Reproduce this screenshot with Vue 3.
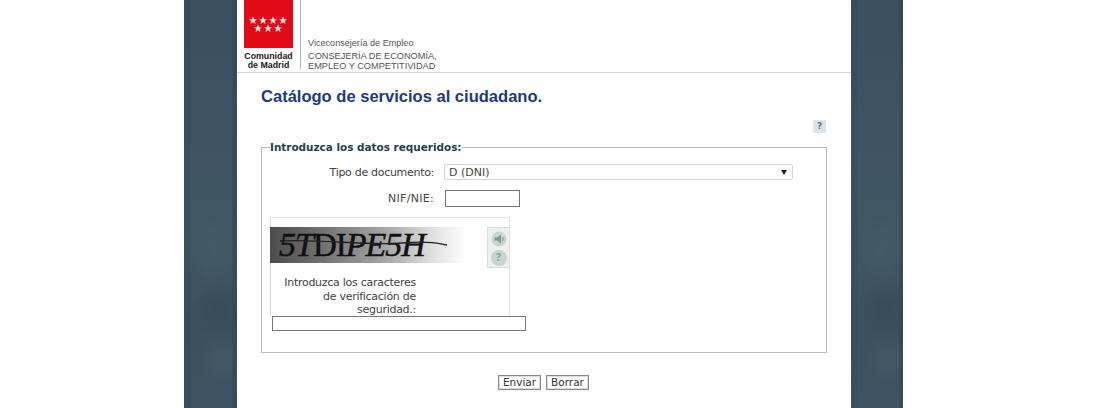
<script setup>
const stars = [[9, 20.5], [19, 20.5], [29, 20.5], [39, 20.5], [14, 28.5], [24, 28.5], [34, 28.5]]
const starPoints = '0,-4 1.2,-1.2 4,-1.2 1.8,.6 2.5,3.6 0,1.8 -2.5,3.6 -1.8,.6 -4,-1.2 -1.2,-1.2'
</script>

<template>
  <div class="page">
    <div class="band bandLeft"></div>
    <main class="content">
      <header class="top">
        <div class="logo">
          <svg class="flag" width="49" height="48" viewBox="0 0 49 48">
            <rect width="49" height="48" fill="#e30a17" />
            <polygon
              v-for="(s, i) in stars"
              :key="i"
              :points="starPoints"
              :transform="`translate(${s[0]} ${s[1]})`"
              fill="#fbe4e4"
            />
          </svg>
          <div class="logoName">Comunidad<br />de Madrid</div>
        </div>
        <div class="rule"></div>
        <div class="dept">
          <div class="vice">Viceconsejería de Empleo</div>
          <div class="cons">CONSEJERÍA DE ECONOMÍA,<br />EMPLEO Y COMPETITIVIDAD</div>
        </div>
      </header>

      <section class="body">
        <h1>Catálogo de servicios al ciudadano.</h1>
        <div class="helpRow">
          <span class="help">?</span>
        </div>
        <fieldset>
          <legend>Introduzca los datos requeridos:</legend>
          <div class="row rowDoc">
            <label>Tipo de documento:</label>
            <div class="fakeSelect">
              <span>D (DNI)</span>
              <span class="caret"></span>
            </div>
          </div>
          <div class="row rowNif">
            <label>NIF/NIE:</label>
            <input class="nif" type="text" />
          </div>
          <div class="captcha">
            <div class="captchaTop">
              <div class="captchaImg">
                <span class="captchaText"><i>5T</i><b>DI</b><i>PE5H</i></span>
                <svg class="strike" width="197" height="36" viewBox="0 0 197 36">
                  <path d="M10 14C50 12 100 19 132 16S168 17 177 18" fill="none" stroke="#222" stroke-width="1.3" />
                </svg>
              </div>
              <div class="captchaTools">
                <span class="tool">
                  <svg width="16" height="16" viewBox="0 0 16 16">
                    <circle cx="8" cy="8" r="7.5" fill="#c6d6cc" />
                    <path d="M3.5 6.5H6L10 3.5V12.5L6 9.5H3.5Z" fill="#7d9a8b" />
                    <path d="M11.5 6C12.5 7 12.5 9 11.5 10" fill="none" stroke="#7d9a8b" />
                  </svg>
                </span>
                <span class="tool toolQ">?</span>
              </div>
            </div>
            <div class="captchaLabel">Introduzca los caracteres de verificación de seguridad.:</div>
            <input class="captchaInput" type="text" />
          </div>
        </fieldset>
        <div class="actions">
          <button type="button">Enviar</button>
          <button type="button">Borrar</button>
        </div>
      </section>
    </main>
    <div class="band"></div>
  </div>
</template>

<style>
html, body {
  margin: 0;
  background: #fff;
}
</style>

<style scoped>
.page {
  display: flex;
  justify-content: flex-start;
  width: 1104px;
  height: 408px;
  padding-left: 184px;
  box-sizing: border-box;
  overflow: hidden;
  font-family: "DejaVu Sans", sans-serif;
  color: #333;
}
.band {
  width: 52px;
  flex: none;
  background:
    linear-gradient(90deg, #33475566 0, #33475566 6px, transparent 7px, transparent 48px, #2f445288 49px, #2f445288 100%),
    radial-gradient(ellipse 22px 34px at 30px 250px, #435a67, transparent),
    radial-gradient(ellipse 30px 30px at 36px 310px, #374b58, transparent),
    radial-gradient(ellipse 24px 24px at 38px 360px, #425965, transparent),
    linear-gradient(180deg, #3b505f 0%, #3e5462 30%, #3f5663 60%, #3c515e 80%, #3f5462 100%);
}
.bandLeft {
  width: 53px;
}
.content {
  width: 614px;
  flex: none;
  background: #fff;
}
.top {
  display: flex;
  height: 73px;
  box-sizing: border-box;
  border-bottom: 1px solid #d6d6d6;
  padding-left: 7px;
}
.logo {
  width: 49px;
}
.flag {
  display: block;
}
.logoName {
  margin-top: 4px;
  font-family: "Liberation Sans", sans-serif;
  font-size: 8.8px;
  line-height: 9px;
  font-weight: 700;
  color: #1c1c1c;
  text-align: center;
  white-space: nowrap;
}
.rule {
  width: 1px;
  height: 69px;
  margin-left: 7px;
  background: #b5b5b5;
}
.dept {
  margin-left: 7px;
  padding-top: 38px;
  font-family: "Liberation Sans", sans-serif;
  color: #555;
  white-space: nowrap;
}
.vice {
  font-size: 9.1px;
  line-height: 11px;
}
.cons {
  margin-top: 2px;
  font-size: 9.2px;
  line-height: 10px;
}
.body {
  padding: 0 24px;
}
h1 {
  margin: 14px 0 0;
  font-family: "Liberation Sans", sans-serif;
  font-size: 16.55px;
  line-height: 20px;
  font-weight: 700;
  color: #1c3a84;
  white-space: nowrap;
}
.helpRow {
  display: flex;
  justify-content: flex-end;
  margin-top: 13px;
  padding-right: 1px;
}
.help {
  width: 13px;
  height: 13px;
  background: #d9e3ea;
  border: 1px solid #e6e6e6;
  box-sizing: border-box;
  font: 700 9px/11px "DejaVu Sans", sans-serif;
  color: #5a7a95;
  text-align: center;
}
fieldset {
  width: 566px;
  height: 212px;
  margin: 8px 0 0;
  padding: 0 0 0 8px;
  box-sizing: border-box;
  border: 1px solid #bdbdbd;
  border-radius: 0;
}
legend {
  padding: 0;
  font-size: 10.45px;
  line-height: 13px;
  font-weight: 700;
  color: #23404f;
  white-space: nowrap;
}
.row {
  display: flex;
  align-items: center;
  font-size: 11px;
}
.row label {
  width: 164px;
  text-align: right;
  white-space: nowrap;
  color: #444;
}
.rowDoc {
  height: 16px;
  margin-top: 10px;
}
.rowDoc label {
  letter-spacing: -0.3px;
}
.fakeSelect {
  display: flex;
  justify-content: space-between;
  align-items: center;
  width: 349px;
  height: 16px;
  margin-left: 10px;
  padding: 0 5px 0 4px;
  box-sizing: border-box;
  border: 1px solid #d4d4d4;
  border-radius: 2px;
  color: #444;
}
.caret {
  width: 0;
  height: 0;
  border-left: 3px solid transparent;
  border-right: 3px solid transparent;
  border-top: 5px solid #222;
}
.rowNif {
  height: 17px;
  margin-top: 10px;
}
.rowNif label {
  letter-spacing: 0.3px;
}
.nif {
  width: 75px;
  height: 17px;
  margin: 0 0 0 11px;
  padding: 0;
  box-sizing: border-box;
  border: 1px solid #777;
  background: #fff;
}
.captcha {
  width: 240px;
  height: 100px;
  margin-top: 10px;
  box-sizing: border-box;
  border: 1px solid #e2e2e2;
  border-bottom: 0;
  border-left-color: #d8d8d8;
}
.captchaTop {
  display: flex;
  padding-top: 9px;
}
.captchaImg {
  width: 197px;
  height: 36px;
  margin-left: -1px;
  position: relative;
  background: linear-gradient(90deg, #4d4d4d 0%, #777 30%, #a9a9a9 60%, #e6e6e6 85%, #fff 100%);
}
.captchaText {
  display: block;
  padding-left: 9px;
  font-family: "Liberation Serif", serif;
  font-size: 34px;
  line-height: 36px;
  letter-spacing: -1px;
  color: #111;
  white-space: nowrap;
  -webkit-text-stroke: 0.5px #111;
}
.captchaText b {
  font-weight: 400;
  font-size: 33px;
}
.strike {
  position: absolute;
  left: 0;
  top: 0;
}
.captchaTools {
  width: 22px;
  height: 41px;
  margin-left: 20px;
  padding-top: 3px;
  box-sizing: border-box;
  background: #efefef;
  border: 1px solid #dcdcdc;
  border-right: 0;
  display: flex;
  flex-direction: column;
  align-items: center;
  gap: 3px;
}
.tool {
  display: block;
  width: 16px;
  height: 16px;
}
.toolQ {
  border-radius: 50%;
  background: #c6d6cc;
  font: 700 10px/16px "DejaVu Sans", sans-serif;
  color: #8aa595;
  text-align: center;
}
.captchaLabel {
  width: 134px;
  margin: 8px 0 0 11px;
  font-size: 11px;
  line-height: 13.5px;
  letter-spacing: -0.27px;
  text-align: right;
  color: #444;
}
.captchaInput {
  display: block;
  width: 254px;
  height: 15px;
  margin: -1px 0 0 1px;
  padding: 0;
  box-sizing: border-box;
  border: 1px solid #777;
  background: #fff;
}
.actions {
  display: flex;
  justify-content: center;
  gap: 5px;
  margin-top: 22px;
  padding-right: 1px;
}
button {
  width: 43px;
  height: 15px;
  padding: 0;
  box-sizing: border-box;
  background: #fff;
  border: 1px solid #888;
  outline: 1px solid #ddd;
  outline-offset: -2px;
  border-radius: 0;
  font: 10.5px/13px "DejaVu Sans", sans-serif;
  color: #333;
}
</style>
